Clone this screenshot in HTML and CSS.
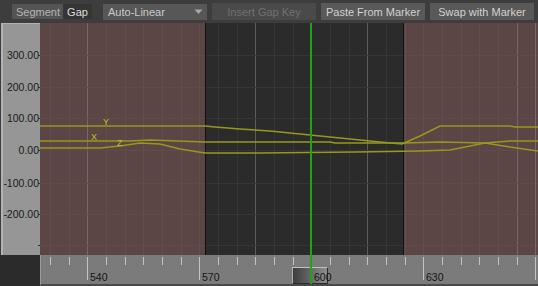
FILE: index.html
```html
<!DOCTYPE html>
<html lang="en">
<head>
  <meta charset="UTF-8" />
  <title>Gap Editor</title>
  <link rel="stylesheet" href="styles.css">
</head>
<body>
  <div class="app">
    <div class="toolbar">
      <div class="tabs">
        <button class="tab">Segment</button>
        <button class="tab active">Gap</button>
      </div>
      <div class="dropdown">
        <span>Auto-Linear</span>
        <svg width="9" height="6" viewBox="0 0 9 6"><path d="M0.5 0.5 L4.5 5 L8.5 0.5 Z" fill="#a8a8a8"/></svg>
      </div>
      <button class="btn disabled">Insert Gap Key</button>
      <button class="btn">Paste From Marker</button>
      <button class="btn">Swap with Marker</button>
    </div>

    <div class="axis">
      <svg width="39" height="232" viewBox="0 -1 39 232">
        <g class="axis-labels">
          <text x="36" y="35">300.00</text>
          <text x="36" y="67">200.00</text>
          <text x="36" y="98">100.00</text>
          <text x="36" y="130">0.00</text>
          <text x="36" y="163">-100.00</text>
          <text x="36" y="194">-200.00</text>
        </g>
        <g stroke="#333" stroke-width="1">
          <line x1="35" y1="31.5" x2="39" y2="31.5"/>
          <line x1="35" y1="63.5" x2="39" y2="63.5"/>
          <line x1="35" y1="94.5" x2="39" y2="94.5"/>
          <line x1="35" y1="126.5" x2="39" y2="126.5"/>
          <line x1="35" y1="159.5" x2="39" y2="159.5"/>
          <line x1="35" y1="190.5" x2="39" y2="190.5"/>
          <line x1="35" y1="221.5" x2="39" y2="221.5"/>
        </g>
      </svg>
    </div>

    <div class="plot">
      <svg width="498" height="232" viewBox="0 -1 498 232">
        <rect x="0" y="-1" width="165" height="232" fill="#5b4545"/>
        <rect x="165" y="-1" width="198" height="232" fill="#2b2b2b"/>
        <rect x="363" y="-1" width="135" height="232" fill="#5b4545"/>

        <g id="vgrid" stroke-width="1"></g>
        <g id="hgrid" stroke-width="1"></g>

        <line x1="165.5" y1="-1" x2="165.5" y2="231" stroke="#111" stroke-width="1"/>
        <line x1="363.5" y1="-1" x2="363.5" y2="231" stroke="#111" stroke-width="1"/>
        <line x1="495.5" y1="-1" x2="495.5" y2="231" stroke="#7a6666" stroke-width="1"/>

        <g fill="none" stroke="#98981e" stroke-width="1.5">
          <polyline points="0,102 165,102 175,103 200,105 230,107 260,110 300,114 340,118 362,120 380,112 400,102 470,102 475,103 498,103"/>
          <polyline points="0,117 90,117 110,116 165,118 290,118 295,119 363,119 400,118 445,119 470,123 498,127"/>
          <polyline points="0,124 60,124 80,122 100,119 120,120 140,125 165,129 220,129 315,128 380,127 410,126 445,119 470,117 498,117"/>
        </g>
        <g class="curve-labels">
          <text x="63" y="101">Y</text>
          <text x="51" y="116">X</text>
          <text x="77" y="122">Z</text>
        </g>

        <rect x="270" y="-1" width="2" height="232" fill="#1da31d"/>
      </svg>
    </div>

    <div class="corner"></div>

    <div class="ruler">
      <div class="thumb"></div>
      <svg width="498" height="29" viewBox="0 0 498 29">
        <g id="ticks" stroke="#c4c4c4" stroke-width="1"></g>
        <g class="ruler-labels">
          <text x="50" y="26">540</text>
          <text x="162" y="26">570</text>
          <text x="274" y="26">600</text>
          <text x="386" y="26">630</text>
        </g>
        <rect x="270" y="0" width="2" height="29" fill="#1da31d"/>
      </svg>
    </div>
  </div>

  <script>
    var ns = "http://www.w3.org/2000/svg";
    var vgrid = document.getElementById("vgrid");
    var hgrid = document.getElementById("hgrid");
    var ticks = document.getElementById("ticks");
    var bright = [2, 11, 17, 25];

    function inDark(x) {
      return x > 165 && x < 363;
    }

    for (var k = 0; k < 27; k++) {
      var x = Math.round(10 + 18.67 * k) + 0.5;
      var strong = bright.indexOf(k) >= 0;
      var l = document.createElementNS(ns, "line");
      l.setAttribute("x1", x); l.setAttribute("x2", x);
      l.setAttribute("y1", -1); l.setAttribute("y2", 231);
      if (inDark(x)) {
        l.setAttribute("stroke", strong ? "#5c5c5c" : "#363636");
      } else {
        l.setAttribute("stroke", strong ? "#7a6464" : "#634d4d");
      }
      vgrid.appendChild(l);

      var t = document.createElementNS(ns, "line");
      var major = (k - 2) % 6 === 0;
      t.setAttribute("x1", x); t.setAttribute("x2", x);
      t.setAttribute("y1", 2); t.setAttribute("y2", major ? 25 : 10);
      ticks.appendChild(t);
    }

    [31, 63, 94, 126, 159, 190, 221].forEach(function (y) {
      var segs = [[0, 165, "#604a4a"], [165, 363, "#363636"], [363, 498, "#604a4a"]];
      segs.forEach(function (s) {
        var l = document.createElementNS(ns, "line");
        l.setAttribute("x1", s[0]); l.setAttribute("x2", s[1]);
        l.setAttribute("y1", y + 0.5); l.setAttribute("y2", y + 0.5);
        l.setAttribute("stroke", s[2]);
        hgrid.appendChild(l);
      });
    });
  </script>
</body>
</html>
```

FILE: styles.css
```css
body {
  margin: 0;
  background: #3d3d3d;
  font-family: 'Liberation Sans', Arial, sans-serif;
  overflow: hidden;
}

.app {
  width: 538px;
  height: 286px;
  display: grid;
  grid-template-columns: 40px 498px;
  grid-template-rows: 23px 232px 31px;
}

.toolbar {
  grid-column: 1 / 3;
  display: flex;
  align-items: center;
  gap: 5px;
  padding: 0 0 0 12px;
  background: #3d3d3d;
}

.tabs {
  display: flex;
  margin-right: 6px;
}

button {
  font-family: inherit;
  font-size: 11px;
  border: none;
  margin: 0;
  cursor: pointer;
}

.tab {
  height: 15px;
  padding: 0 4px;
  background: #545454;
  color: #b4b4b4;
}

.tab:first-child {
  width: 51px;
}

.tab.active {
  width: 29px;
  background: #353535;
  color: #dcdcdc;
}

.dropdown {
  width: 104px;
  height: 16px;
  box-sizing: border-box;
  padding: 0 4px 0 5px;
  background: #575757;
  color: #cacaca;
  font-size: 11px;
  display: flex;
  align-items: center;
  justify-content: space-between;
}

.btn {
  width: 104px;
  height: 17px;
  padding: 0;
  background: #595959;
  color: #d2d2d2;
}

.btn.disabled {
  background: #4a4a4a;
  color: #707070;
}

.axis {
  background: #969696;
  border-left: 2px solid #b2b2b2;
  border-top: 1px solid #b2b2b2;
  box-sizing: border-box;
  margin-left: 1px;
  overflow: hidden;
}

.axis svg {
  display: block;
  margin-top: -1px;
}

.axis-labels text {
  font-size: 10.5px;
  fill: #1a1a1a;
  text-anchor: end;
}

.plot svg {
  display: block;
}

.curve-labels text {
  font-size: 9px;
  fill: #c2c21e;
}

.corner {
  background: #2b2b2b;
}

.ruler {
  position: relative;
  background: #7b7b7b;
  border-left: 1px solid #9a9a9a;
  border-bottom: 2px solid #4a4a4a;
}

.ruler svg {
  position: relative;
  display: block;
  margin-left: -1px;
}

.ruler-labels text {
  font-size: 10.5px;
  fill: #161616;
}

.thumb {
  position: absolute;
  left: 251px;
  top: 12px;
  width: 34px;
  height: 15px;
  background: linear-gradient(to right, #3e3e3e, #8e8e8e);
  border: 1px solid #2c2c2c;
  border-top-color: #c0c0c0;
  border-left-color: #b0b0b0;
}
```
